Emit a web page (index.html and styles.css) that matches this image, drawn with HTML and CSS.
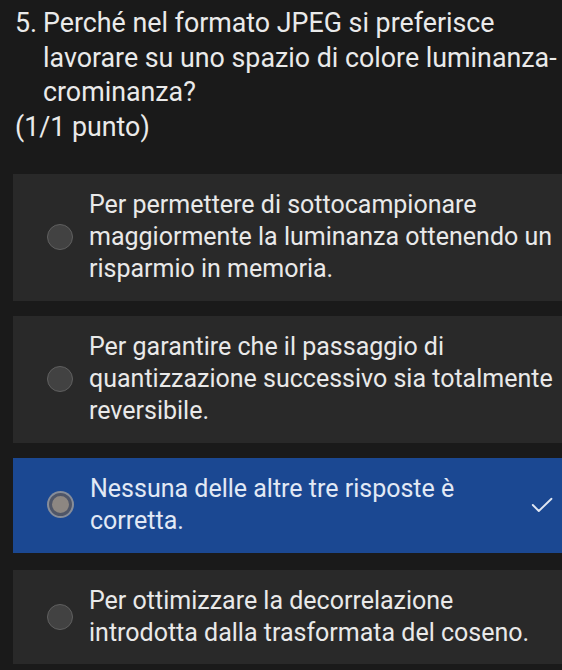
FILE: index.html
```html
<!DOCTYPE html>
<html lang="it">
<head>
<meta charset="utf-8">
<link rel="stylesheet" href="styles.css">
</head>
<body>
<div class="page">
  <div class="question">
    <div class="q-line"><span class="q-num">5.</span><span class="q-text">Perché nel formato JPEG si preferisce<br>lavorare su uno spazio di colore luminanza-<br>crominanza?</span></div>
    <div class="q-points">(1/1 punto)</div>
  </div>
  <div class="options">
    <div class="option tall">
      <span class="radio"></span>
      <span class="label">Per permettere di sottocampionare<br>maggiormente la luminanza ottenendo un<br>risparmio in memoria.</span>
    </div>
    <div class="option tall">
      <span class="radio"></span>
      <span class="label">Per garantire che il passaggio di<br>quantizzazione successivo sia totalmente<br>reversibile.</span>
    </div>
    <div class="option selected">
      <span class="radio"></span>
      <span class="label">Nessuna delle altre tre risposte è<br>corretta.</span>
      <svg class="check" width="22" height="16" viewBox="0 0 22 16"><path d="M1.8 8 L7.8 14 L20.5 1.8" fill="none" stroke="#e0e7f2" stroke-width="1.9" stroke-linecap="round" stroke-linejoin="round"/></svg>
    </div>
    <div class="option last">
      <span class="radio"></span>
      <span class="label">Per ottimizzare la decorrelazione<br>introdotta dalla trasformata del coseno.</span>
    </div>
  </div>
</div>
</body>
</html>
```
FILE: styles.css
```css
html, body {
  margin: 0;
  padding: 0;
  background: #1a1a1a;
}
body {
  font-family: Roboto, "Noto Sans", sans-serif;
  color: #eaeaea;
  width: 562px;
  height: 670px;
  overflow: hidden;
}
.page {
  padding-top: 6px;
}
.question {
  font-size: 26.8px;
  line-height: 34.7px;
  padding-left: 15px;
  white-space: nowrap;
}
.q-line {
  display: flex;
}
.q-num {
  flex: 0 0 28px;
}
.q-text {
  flex: 1;
}
.options {
  display: flex;
  flex-direction: column;
  gap: 15px;
  margin-top: 29px;
  padding-left: 13px;
}
.option {
  background: #292929;
  display: flex;
  align-items: center;
  padding: 15px 0 15px 34px;
  font-size: 25px;
  line-height: 32px;
  color: #e9e9e9;
  white-space: nowrap;
}
.option.tall {
  padding: 15.5px 0 15.5px 34px;
}
.option.last {
  margin-top: 2px;
}
.radio {
  flex: 0 0 auto;
  width: 24px;
  height: 24px;
  border-radius: 50%;
  background: #424242;
  border: 1.5px solid #606060;
  margin-right: 16px;
}
.label {
  flex: 1;
}
.option.selected {
  background: #1b4892;
  color: #e2e9f5;
  padding: 15px 0 16px 34px;
}
.option.selected .radio {
  width: 17px;
  height: 17px;
  background: #8d8782;
  border: 3px solid #4f5668;
  box-shadow: 0 0 0 2px #878d99;
  margin-left: 2px;
  margin-right: 18px;
}
.check {
  flex: 0 0 auto;
  margin-right: 9px;
}
```
